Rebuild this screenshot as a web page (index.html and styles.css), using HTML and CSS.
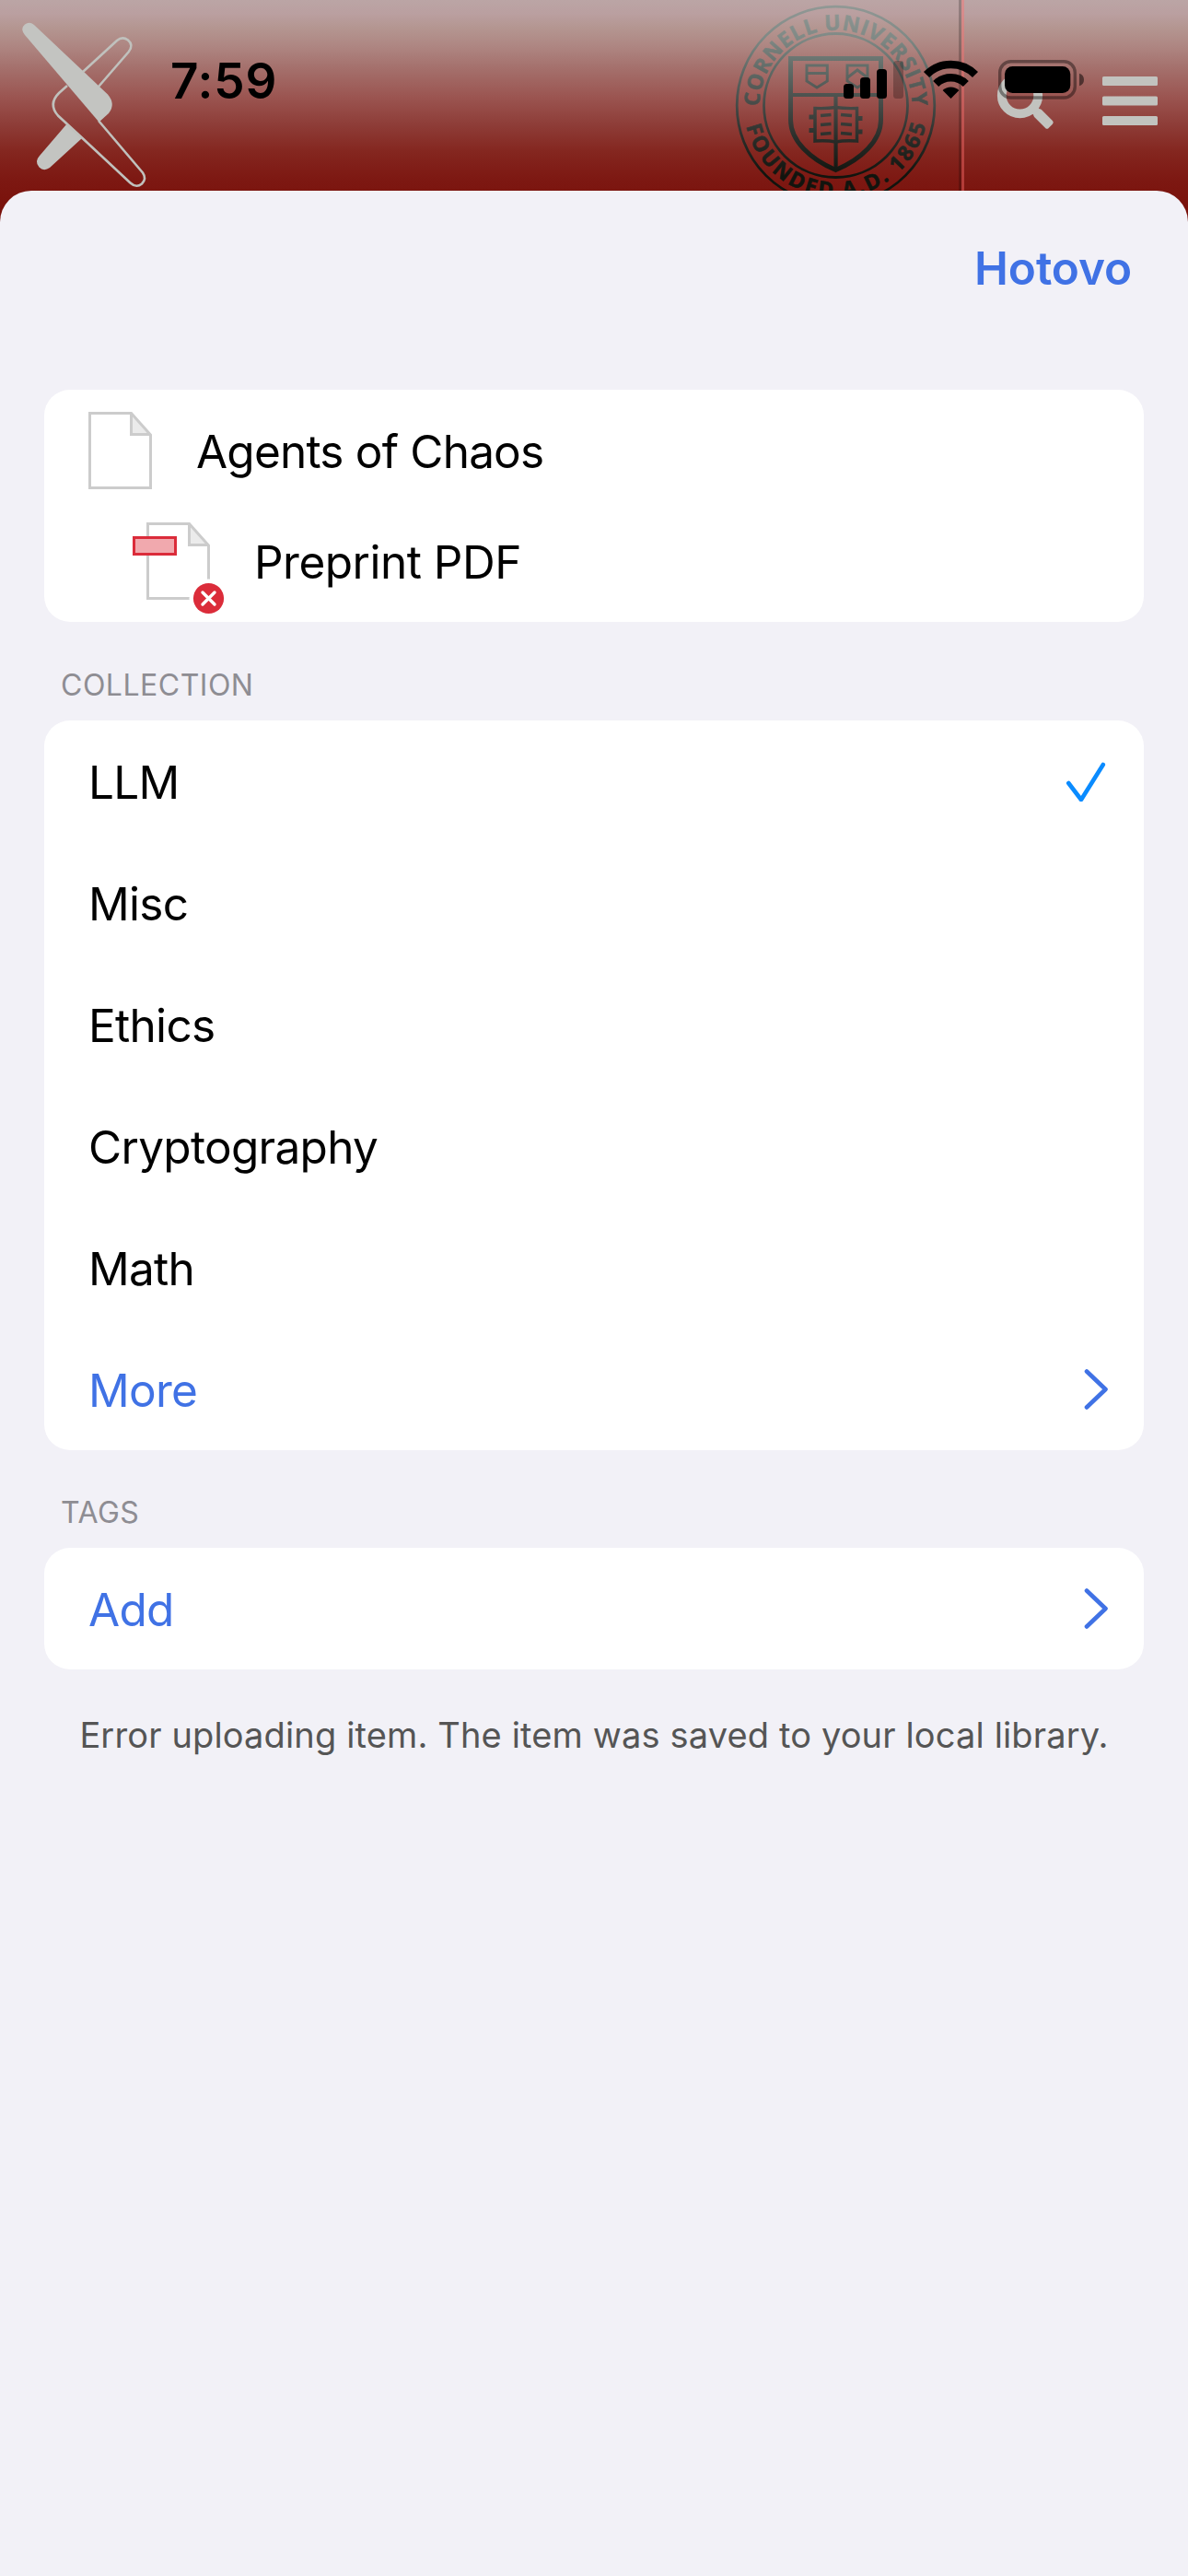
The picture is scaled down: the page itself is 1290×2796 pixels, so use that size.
FILE: index.html
```
<!DOCTYPE html>
<html lang="cs">
<head>
    <meta charset="UTF-8">
    <meta name="viewport" content="width=device-width, initial-scale=1.0">
    <title>Agents of Chaos</title>
    <link rel="stylesheet" href="styles.css">
</head>
<body>
    <header class="site-header">
        <svg class="header-art" width="1290" height="250" viewBox="0 0 1290 250">
            <defs>
                <linearGradient id="sealInk" gradientUnits="userSpaceOnUse" x1="0" y1="0" x2="0" y2="207">
                    <stop offset="0" stop-color="#949b98"/>
                    <stop offset="0.2" stop-color="#7f8985"/>
                    <stop offset="0.35" stop-color="#636d69"/>
                    <stop offset="0.55" stop-color="#464a47"/>
                    <stop offset="0.75" stop-color="#262925"/>
                    <stop offset="0.92" stop-color="#11140e"/>
                    <stop offset="1" stop-color="#11140e"/>
                </linearGradient>
                <path id="sealTop" d="M824.500 115.500 A83 83 0 0 1 990.500 115.500"/>
                <path id="sealBottom" d="M809.500 134 A100 100 0 0 0 1005.500 134"/>
            </defs>

            <!-- crossed wings logo -->
            <g fill="#c3c4c1">
                <path d="M37 27 L89 76 L117 102.500 Q126 113 118 123 L107.500 132.500 L27 38 Q21.500 31 27 26.500 Q32 23 37 27 Z"/>
                <path d="M73 134 L89 150 L54 182 Q47.500 186.500 42.500 181.500 Q37 175.500 43 169 Z"/>
            </g>
            <g fill="none" stroke="#c0c1bd" stroke-width="2.600">
                <path d="M90 78 L127 44 Q133 39 139 43.500 Q145.500 49 139.500 56.500 L107 94"/>
                <path d="M73 93 L64 101 Q52 113 63 125.500 L89 149.500 L141.500 198.500 Q148 204.500 154 199.500 Q159.500 194 155 187.500 L107 131"/>
            </g>

            <!-- university seal -->
            <g fill="none" stroke="url(#sealInk)">
                <circle cx="907.500" cy="114.500" r="107.300" stroke-width="2.800"/>
                <circle cx="907.500" cy="114.500" r="78" stroke-width="2.800"/>
                <path stroke-width="5" d="M858.500 63.500 H956.500 V130 C956.500 153 935 173 907.500 184.500 C880 173 858.500 153 858.500 130 Z"/>
                <path stroke-width="4.200" d="M858 103 H957 M907.500 103.100 L907.600 184"/>
                <path stroke-width="3" d="M876 71 H898.300 V88 L887 95 L876 88 Z M876 79.500 L898 79.600"/>
                <path stroke-width="3" d="M920 71 H942 V88 L931 95 L920 88 Z M920.500 84 L931 76 L941.500 84"/>
                <path stroke-width="3.500" d="M885 117.500 Q898 118 907.500 116.500 Q917 118 930.500 117.500 V153 Q917 152 907.500 154 Q898 152 885 153 Z"/>
                <path stroke-width="3.600" d="M891 125.500 L902.500 124.500 M891 135.500 L902.500 134.500 M891 145.500 L902.500 144.500 M913 124.500 L925 125.500 M913 134.500 L925 135.500 M913 144.500 L925 145.500"/>
                <path stroke-width="5" d="M878.500 127 L884 127.100 M878.500 141.500 L884 141.600 M932 128.500 L936.500 128.600 M932 143 L936.500 143.100"/>
            </g>
            <g class="seal-text" fill="url(#sealInk)" stroke="url(#sealInk)" stroke-width="0.600">
                <text><textPath href="#sealTop" textLength="260">CORNELL UNIVERSITY</textPath></text>
                <text><textPath href="#sealBottom" startOffset="3" textLength="269">FOUNDED A.D. 1865</textPath></text>
            </g>

            <!-- divider -->
            <rect x="1041" y="0" width="3" height="250" fill="#000" opacity="0.220"/>
            <rect x="1044" y="0" width="3" height="250" fill="#ff6f6f" opacity="0.420"/>

            <!-- search and menu -->
            <g fill="none" stroke="#c2c3bf">
                <circle cx="1107.500" cy="103.700" r="19.700" stroke-width="9.800"/>
                <path stroke-width="9" stroke-linejoin="round" d="M1124 120 L1129 125"/>
            </g>
            <rect x="1122" y="123.500" width="22" height="11" rx="2.500" fill="#c2c3bf" transform="rotate(45 1133 129)"/>
            <g fill="#c2c3bf">
                <rect x="1197" y="83" width="60" height="10" rx="1.500"/>
                <rect x="1197" y="104.500" width="60" height="10" rx="1.500"/>
                <rect x="1197" y="126" width="60" height="10" rx="1.500"/>
            </g>
        </svg>

        <div class="status-bar">
            <span class="time">7:59</span>
            <svg class="status-icons" width="264" height="46" viewBox="914 63 264 46">
                <rect x="916" y="91" width="11" height="16" rx="3.500"/>
                <rect x="934" y="84" width="11" height="23" rx="3.500"/>
                <rect x="952" y="75" width="11" height="32" rx="3.500"/>
                <rect x="970" y="66" width="11" height="41" rx="3.500" opacity="0.250"/>
                <g fill="none" stroke="#000" stroke-width="8.500">
                    <path d="M1006 81 A37.300 37.300 0 0 1 1059 81"/>
                    <path d="M1016.200 91 A23 23 0 0 1 1048.800 91"/>
                </g>
                <path d="M1032.500 107 L1023.600 98 A12.800 12.800 0 0 1 1041.400 98 Z"/>
                <rect x="1085.700" y="66.700" width="81.600" height="39.300" rx="12" fill="none" stroke="#000" stroke-width="3.400" opacity="0.400"/>
                <rect x="1091" y="72" width="71.300" height="29" rx="8.500"/>
                <path d="M1172 79.700 Q1177 81.500 1177 86.500 Q1177 91.500 1172 93.300 Z" opacity="0.500"/>
            </svg>
        </div>
    </header>

    <main class="sheet">
        <div class="toolbar">
            <a class="done">Hotovo</a>
        </div>

        <section class="card items">
            <div class="item">
                <svg width="69" height="84" viewBox="0 0 69 84">
                    <path d="M46.500 1.500 V24.500 H67.500 Z" fill="#ebebeb"/>
                    <path d="M1.500 1.500 H46.500 L67.500 25 V82.500 H1.500 Z M46.500 1.500 V24.500 H67.500" fill="none" stroke="#ccc" stroke-width="3"/>
                </svg>
                <span class="item-title">Agents of Chaos</span>
            </div>
            <div class="item attachment">
                <svg width="100" height="100" viewBox="0 0 100 100">
                    <path d="M61.500 1.500 V24.500 H82.500 Z" fill="#ebebeb"/>
                    <path d="M16.500 1.500 H61.500 L82.500 25 V82.500 H16.500 Z M61.500 1.500 V24.500 H82.500" fill="none" stroke="#ccc" stroke-width="3"/>
                    <rect x="1.500" y="16.500" width="45" height="18" fill="#f1a9ae" stroke="#db2c3a" stroke-width="3"/>
                    <circle cx="82.500" cy="82.500" r="21" fill="#fff"/>
                    <circle cx="82.500" cy="82.500" r="16.600" fill="#db2c3a"/>
                    <path d="M76 76 L89 89 M89 76 L76 89" stroke="#fff" stroke-width="3.400" stroke-linecap="round"/>
                </svg>
                <span class="item-title">Preprint PDF</span>
            </div>
        </section>

        <h2 class="section-title">COLLECTION</h2>
        <section class="card">
            <div class="row">
                <span>LLM</span>
                <svg class="check" width="44" height="44" viewBox="0 0 44 44">
                    <path d="M3.300 24 L17 42 L40.800 4"/>
                </svg>
            </div>
            <div class="row"><span>Misc</span></div>
            <div class="row"><span>Ethics</span></div>
            <div class="row"><span>Cryptography</span></div>
            <div class="row"><span>Math</span></div>
            <div class="row link">
                <span>More</span>
                <svg class="chevron" width="26" height="46" viewBox="0 0 26 46">
                    <path d="M3 3.500 L23.500 23 L3 42.500"/>
                </svg>
            </div>
        </section>

        <h2 class="section-title">TAGS</h2>
        <section class="card">
            <div class="row link">
                <span>Add</span>
                <svg class="chevron" width="26" height="46" viewBox="0 0 26 46">
                    <path d="M3 3.500 L23.500 23 L3 42.500"/>
                </svg>
            </div>
        </section>

        <p class="message">Error uploading item. The item was saved to your local library.</p>
    </main>
</body>
</html>
```
FILE: styles.css
```
body {
    margin: 0;
    font-family: Inter, 'Liberation Sans', sans-serif;
    font-size: 49.500px;
    color: #000;
    background-color: #f2f1f7;
}
.site-header {
    position: relative;
    height: 207px;
}
.header-art {
    position: absolute;
    top: 0;
    left: 0;
    background: linear-gradient(#bba5a5 0, #ba9fa0 15px, #b49691 30px, #ae8682 50px, #a46f6b 75px, #9b5551 105px, #8e3d38 135px, #84261f 165px, #7d1812 195px, #780e08 240px);
}
.status-bar {
    position: relative;
    display: flex;
    justify-content: space-between;
    align-items: center;
    height: 172px;
    padding: 0 112px 0 185px;
}
.time {
    font-size: 53px;
    font-weight: 600;
    letter-spacing: 0.800px;
    margin-top: 4px;
}
.sheet {
    position: relative;
    box-sizing: border-box;
    height: 2589px;
    padding: 0 48px;
    background-color: #f2f1f7;
    border-radius: 34px 34px 0 0;
    overflow: hidden;
}
.toolbar {
    display: flex;
    justify-content: flex-end;
    align-items: center;
    height: 168px;
    margin-bottom: 48px;
    padding-right: 13px;
}
.done {
    color: #4072e5;
    font-weight: 600;
    letter-spacing: -0.100px;
}
.card {
    background-color: #fff;
    border-radius: 28px;
}
.items {
    padding: 6px 0;
}
.item {
    display: flex;
    align-items: center;
    box-sizing: border-box;
    height: 120px;
    padding-left: 48px;
    gap: 48px;
}
.attachment {
    padding-left: 96px;
    gap: 32px;
}
.attachment svg {
    margin-top: 16px;
}
.item-title {
    padding-top: 2px;
    letter-spacing: -0.800px;
}
.attachment .item-title {
    letter-spacing: -0.500px;
}
.section-title {
    display: flex;
    align-items: flex-end;
    box-sizing: border-box;
    height: 107px;
    margin: 0;
    padding: 0 18px 19px;
    font-size: 32px;
    line-height: 38px;
    font-weight: 400;
    letter-spacing: 0.500px;
    color: #8e8d93;
}
.card + .section-title + .card {
    margin-bottom: -1px;
}
.row {
    display: flex;
    justify-content: space-between;
    align-items: center;
    box-sizing: border-box;
    height: 132px;
    padding: 0 39px 0 48px;
    letter-spacing: -0.700px;
}
.row span {
    padding-top: 2px;
}
.link {
    color: #4072e5;
}
.check,
.chevron {
    fill: none;
    stroke-width: 4.600px;
    stroke-linecap: round;
    stroke-linejoin: round;
}
.check {
    margin-right: 2px;
    stroke: #0a8bff;
}
.chevron {
    stroke: #4072e5;
}
.message {
    margin: 48px 0 0;
    text-align: center;
    font-size: 38px;
    line-height: 48px;
    letter-spacing: 0.140px;
    white-space: nowrap;
    color: #555;
}
.seal-text {
    font-family: 'Open Sans', 'Noto Sans', sans-serif;
    font-size: 23px;
    font-weight: 700;
}
```
